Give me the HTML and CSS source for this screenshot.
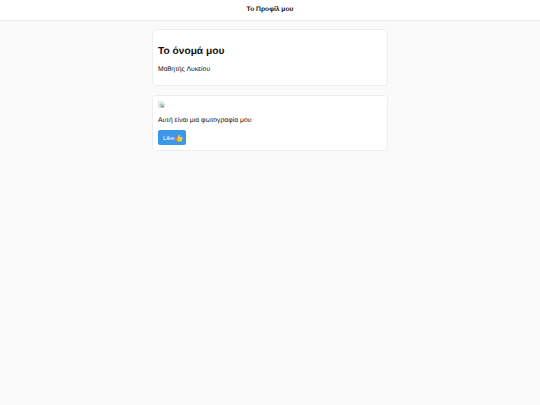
FILE: index.html
```html
<!DOCTYPE html>
<html lang="el">
<head>
    <meta charset="UTF-8">
    <meta name="viewport" content="width=device-width, initial-scale=1.0">
    <title>Το Προφίλ μου</title>
    <link rel="stylesheet" href="styles.css">
</head>
<body>

<header class="top-bar">Το Προφίλ μου</header>

<main class="content">
    <section class="card card-name">
        <h1>Το όνομά μου</h1>
        <p>Μαθητής Λυκείου</p>
    </section>

    <section class="card card-photo">
        <!-- broken image placeholder -->
        <svg class="broken-img" width="7" height="7" viewBox="0 0 16 16">
            <path d="M1 1h9l5 5v9H1z" fill="#eef1f4" stroke="#c3cad1" stroke-width="1"/>
            <path d="M3 9c1-4 5-5 8-3l2 2v3H3z" fill="#a9c4dc"/>
            <path d="M5 14l3-4 2 2 3-2v4z" fill="#5aa33c"/>
        </svg>
        <p>Αυτή είναι μια φωτογραφία μου</p>
        <button class="like-btn">Like
            <svg class="thumb" width="8" height="8" viewBox="0 0 16 16">
                <path d="M1 7h3v8H1z" fill="#c98a1e"/>
                <path d="M5 7l3-6c2 0 2.500 1.500 2 3l-.5 2H14c1.500 0 1.500 2 1 3l-1.500 5c-.3.700-.8 1-1.500 1H5z" fill="#f6c53c"/>
            </svg>
        </button>
    </section>
</main>

</body>
</html>
```

FILE: styles.css
```css
body {
    margin: 0;
    font-family: "Liberation Sans", Arial, sans-serif;
    text-rendering: geometricPrecision;
    background-color: #fafafa;
    color: #111;
}
.top-bar {
    height: 20px;
    line-height: 20px;
    background-color: #fff;
    border-bottom: 1px solid #eee;
    text-align: center;
    font-size: 6.7px;
    font-weight: bold;
}
.content {
    width: 236px;
    margin: 8px auto 0;
    display: flex;
    flex-direction: column;
    gap: 9px;
}
.card {
    background-color: #fff;
    border: 1px solid #eee;
    border-radius: 4px;
    box-sizing: border-box;
    height: 56.5px;
    padding: 0 5px;
}
.card h1 {
    margin: 15px 0 0;
    font-size: 10.2px;
    line-height: 14px;
}
.card p {
    margin: 0;
    font-size: 6.8px;
    line-height: 10px;
}
.card-name p {
    margin-top: 6px;
}
.broken-img {
    display: block;
    margin-top: 5.5px;
}
.card-photo p {
    margin-top: 8px;
}
.like-btn {
    display: flex;
    align-items: center;
    gap: 1px;
    margin-top: 4px;
    height: 15px;
    padding: 0 3px 0 5px;
    background-color: #3b97e8;
    border: none;
    border-radius: 2px;
    color: #fff;
    font-family: inherit;
    font-size: 6.2px;
    font-weight: normal;
}
```
